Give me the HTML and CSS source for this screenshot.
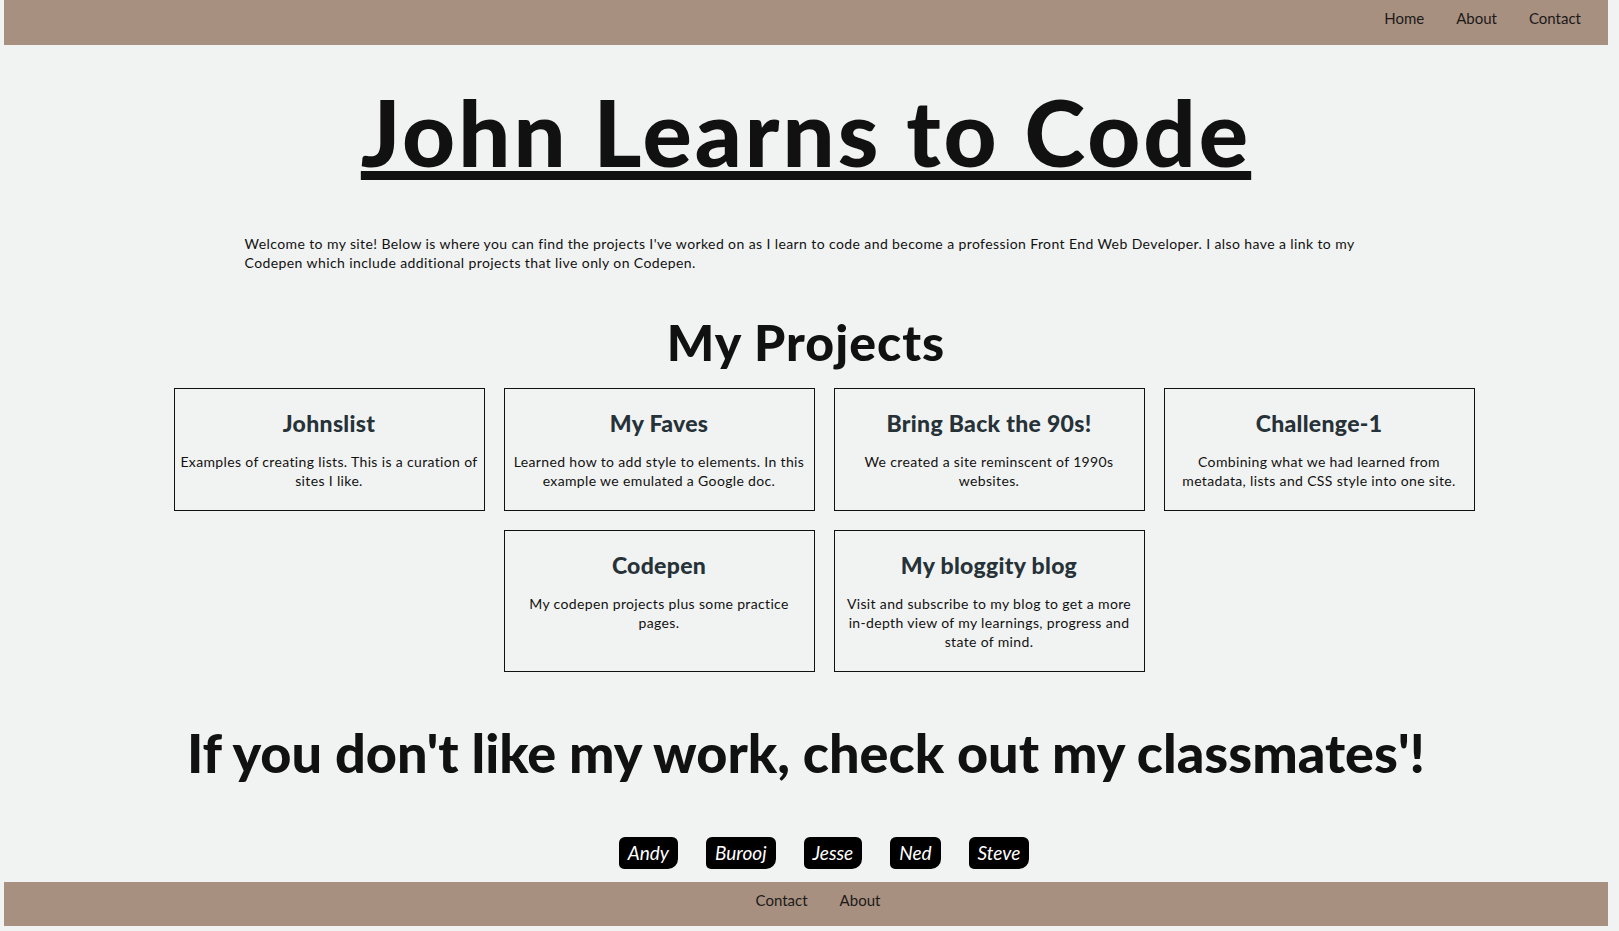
FILE: index.html
```html
<!DOCTYPE html>
<html lang="en">
<head>
    <meta charset="UTF-8">
    <meta name="viewport" content="width=device-width, initial-scale=1.0">
    <title>John Learns to Code</title>
    <link rel="stylesheet" href="styles.css">
</head>
<body>
    <header class="top-bar">
        <ul class="nav-links">
            <li><a href="#">Home</a></li>
            <li><a href="#">About</a></li>
            <li><a href="#">Contact</a></li>
        </ul>
    </header>

    <h1 class="site-title">John Learns to Code</h1>

    <p class="intro">Welcome to my site! Below is where you can find the projects I've worked on as I learn to code and become a profession Front End Web Developer. I also have a link to my Codepen which include additional projects that live only on Codepen.</p>

    <h2 class="section-title">My Projects</h2>
    <ul class="projects">
        <li class="project-card">
            <h3>Johnslist</h3>
            <p>Examples of creating lists. This is a curation of sites I like.</p>
        </li>
        <li class="project-card">
            <h3>My Faves</h3>
            <p>Learned how to add style to elements. In this example we emulated a Google doc.</p>
        </li>
        <li class="project-card">
            <h3>Bring Back the 90s!</h3>
            <p>We created a site reminscent of 1990s websites.</p>
        </li>
        <li class="project-card">
            <h3>Challenge-1</h3>
            <p>Combining what we had learned from metadata, lists and CSS style into one site.</p>
        </li>
        <li class="project-card">
            <h3>Codepen</h3>
            <p>My codepen projects plus some practice pages.</p>
        </li>
        <li class="project-card">
            <h3>My bloggity blog</h3>
            <p>Visit and subscribe to my blog to get a more in-depth view of my learnings, progress and state of mind.</p>
        </li>
    </ul>

    <h2 class="classmates-title">If you don't like my work, check out my classmates'!</h2>
    <ul class="classmates">
        <li><a href="#">Andy</a></li>
        <li><a href="#">Burooj</a></li>
        <li><a href="#">Jesse</a></li>
        <li><a href="#">Ned</a></li>
        <li><a href="#">Steve</a></li>
    </ul>

    <footer class="bottom-bar">
        <ul class="nav-links">
            <li><a href="#">Contact</a></li>
            <li><a href="#">About</a></li>
        </ul>
    </footer>
</body>
</html>
```

FILE: styles.css
```css
* {
    margin: 0;
    padding: 0;
    box-sizing: border-box;
}

body {
    font-family: Lato, "Liberation Sans", sans-serif;
    background: #f1f3f2;
    color: #111;
    padding: 0 11px 4px 4px;
}

a {
    color: inherit;
    text-decoration: none;
}

.top-bar,
.bottom-bar {
    background: #a89080;
    height: 45px;
    display: flex;
    align-items: flex-start;
    padding-top: 9px;
}

.top-bar {
    justify-content: flex-end;
    padding-right: 27px;
}

.bottom-bar {
    justify-content: center;
    padding-left: 24px;
    height: 44px;
}

.nav-links {
    list-style: none;
    display: flex;
    gap: 32px;
    font-size: 15px;
    line-height: 18px;
    color: #1c1a19;
}

.site-title {
    text-align: center;
    font-size: 92px;
    font-weight: 900;
    letter-spacing: 3px;
    text-decoration: underline;
    text-decoration-thickness: 9px;
    text-underline-offset: 4px;
    margin-top: 36px;
    line-height: 1.1;
}

.intro {
    width: 70%;
    margin: 52px auto 0;
    font-size: 14px;
    line-height: 19px;
    letter-spacing: 0.4px;
}

.section-title {
    text-align: center;
    font-size: 50px;
    font-weight: 900;
    letter-spacing: 1px;
    margin-top: 40px;
    line-height: 1.2;
}

.projects {
    list-style: none;
    display: flex;
    flex-wrap: wrap;
    justify-content: center;
    gap: 19px;
    padding-left: 36px;
    margin-top: 16px;
}

.project-card {
    width: 311px;
    border: 1px solid #111;
    padding: 0 4px 20px;
    text-align: center;
}

.project-card h3 {
    color: #263238;
    font-size: 23px;
    font-weight: 900;
    letter-spacing: 0.3px;
    margin: 20px 0 15px;
}

.project-card p {
    font-size: 14px;
    line-height: 19px;
    letter-spacing: 0.35px;
}

.classmates-title {
    text-align: center;
    font-size: 54px;
    font-weight: 900;
    margin-top: 49px;
    line-height: 1.2;
}

.classmates {
    list-style: none;
    display: flex;
    justify-content: center;
    gap: 28px;
    padding-left: 36px;
    margin: 51px 0 13px;
}

.classmates a {
    display: block;
    background: #000;
    color: #fff;
    font-style: italic;
    font-size: 19px;
    height: 32px;
    line-height: 32px;
    padding: 0 9px;
    border-radius: 6px 6px 10px 5px;
}
```
